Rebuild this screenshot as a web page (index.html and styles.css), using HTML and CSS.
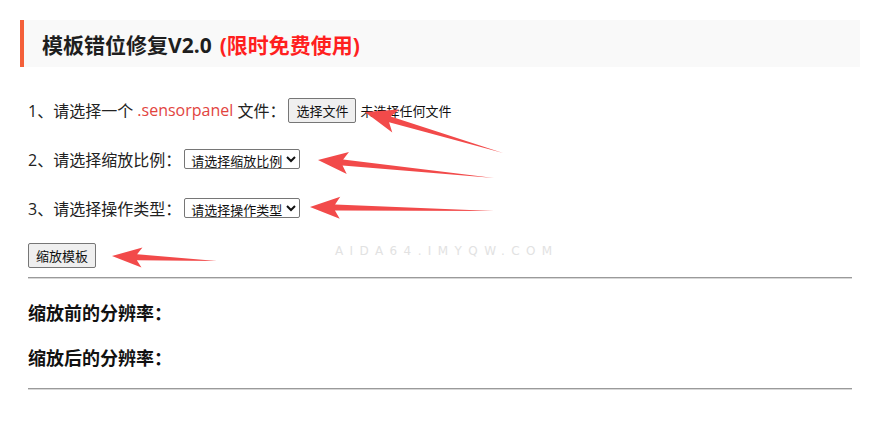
FILE: index.html
```html
<!DOCTYPE html>
<html lang="zh-CN">
<head>
    <meta charset="UTF-8">
    <meta name="viewport" content="width=device-width, initial-scale=1.0">
    <title>模板错位修复V2.0</title>
    <link rel="stylesheet" href="styles.css">
</head>
<body>
    <div class="page">
        <div class="title">模板错位修复V2.0<span class="free">(限时免费使用)</span></div>

        <div class="content">
            <div class="step">
                1、请选择一个&nbsp;<span class="ext">.sensorpanel</span>&nbsp;文件：
                <button class="btn">选择文件</button>
                <span class="file-name">未选择任何文件</span>
            </div>
            <div class="step">
                2、请选择缩放比例：
                <select class="picker">
                    <option>请选择缩放比例</option>
                    <option>0.5</option>
                    <option>1.5</option>
                    <option>2.0</option>
                </select>
            </div>
            <div class="step">
                3、请选择操作类型：
                <select class="picker">
                    <option>请选择操作类型</option>
                    <option>放大</option>
                    <option>缩小</option>
                </select>
            </div>
            <div class="step">
                <button class="btn">缩放模板</button>
            </div>

            <hr class="line">
            <h3 class="result">缩放前的分辨率：</h3>
            <h3 class="result">缩放后的分辨率：</h3>
            <hr class="line">
        </div>

        <div class="watermark">AIDA64.IMYQW.COM</div>

        <!-- 标注箭头 -->
        <svg class="arrows" width="880" height="445" viewBox="0 0 880 445">
            <g fill="#f24a4a">
                <polygon transform="translate(365 112) rotate(16.5)" points="0,0 32,-12 26,-3 144,0 26,3 32,12"/>
                <polygon transform="translate(318 160) rotate(5.8)" points="0,0 30,-11 25,-3 177,0 25,3 30,11"/>
                <polygon transform="translate(310 207) rotate(1.25)" points="0,0 30,-11 25,-3 184,0 25,3 30,11"/>
                <polygon transform="translate(112 256) rotate(2.7)" points="0,0 30,-10 25,-3 105,0 25,3 30,10"/>
            </g>
        </svg>
    </div>
</body>
</html>
```

FILE: styles.css
```css
body {
    margin: 0;
    font-family: "Open Sans", "Noto Sans CJK SC", sans-serif;
    color: #222;
    background-color: #fff;
}

.page {
    position: relative;
    width: 880px;
    height: 445px;
    padding: 20px;
    box-sizing: border-box;
    overflow: hidden;
}

.title {
    display: flex;
    align-items: center;
    height: 47px;
    padding-left: 18px;
    background-color: #f9f9f9;
    border-left: 4px solid #f4603a;
    font-size: 21px;
    font-weight: bold;
    color: #1e1e1e;
}

.free {
    margin-left: 8px;
    color: #ff1f1f;
}

.content {
    display: flex;
    flex-direction: column;
    padding: 30px 8px 0;
}

.step {
    display: flex;
    align-items: center;
    height: 26px;
    margin-bottom: 23px;
    font-size: 16px;
    color: #222;
}

.step:nth-child(4) {
    margin-bottom: 0;
}

.ext {
    color: #e2443e;
}

.btn {
    height: 25px;
    padding: 0 7px;
    margin-left: 3px;
    font-family: "Noto Sans CJK SC", sans-serif;
    font-size: 13px;
    color: #111;
    background-color: #efefef;
    border: 1px solid #767676;
    border-radius: 2px;
}

.step:nth-child(4) .btn {
    margin-left: 0;
    transform: translateY(-2px);
}

.file-name {
    margin-left: 4px;
    font-family: "Noto Sans CJK SC", sans-serif;
    font-size: 13px;
    color: #111;
}

.picker {
    height: 20px;
    margin-left: 3px;
    padding: 0 0 0 2px;
    font-family: "Noto Sans CJK SC", sans-serif;
    font-size: 13px;
    line-height: 16px;
    color: #111;
    background-color: #fff;
    border: 1px solid #767676;
    border-radius: 2px;
}

.line {
    width: 100%;
    margin: 7px 0 0;
    border: none;
    border-top: 1px solid #9a9a9a;
    border-bottom: 1px solid #d8d8d8;
}

.result {
    margin: 22px 0 0;
    font-size: 18px;
    font-weight: bold;
    line-height: 24px;
    color: #111;
}

.result + .result {
    margin-top: 21px;
}

.result + .line {
    margin-top: 18px;
}

.watermark {
    position: absolute;
    left: 335px;
    top: 244px;
    font-family: "DejaVu Sans", sans-serif;
    font-size: 12px;
    letter-spacing: 6.4px;
    color: #e2e2e2;
}

.arrows {
    position: absolute;
    left: 0;
    top: 0;
    pointer-events: none;
}
```
